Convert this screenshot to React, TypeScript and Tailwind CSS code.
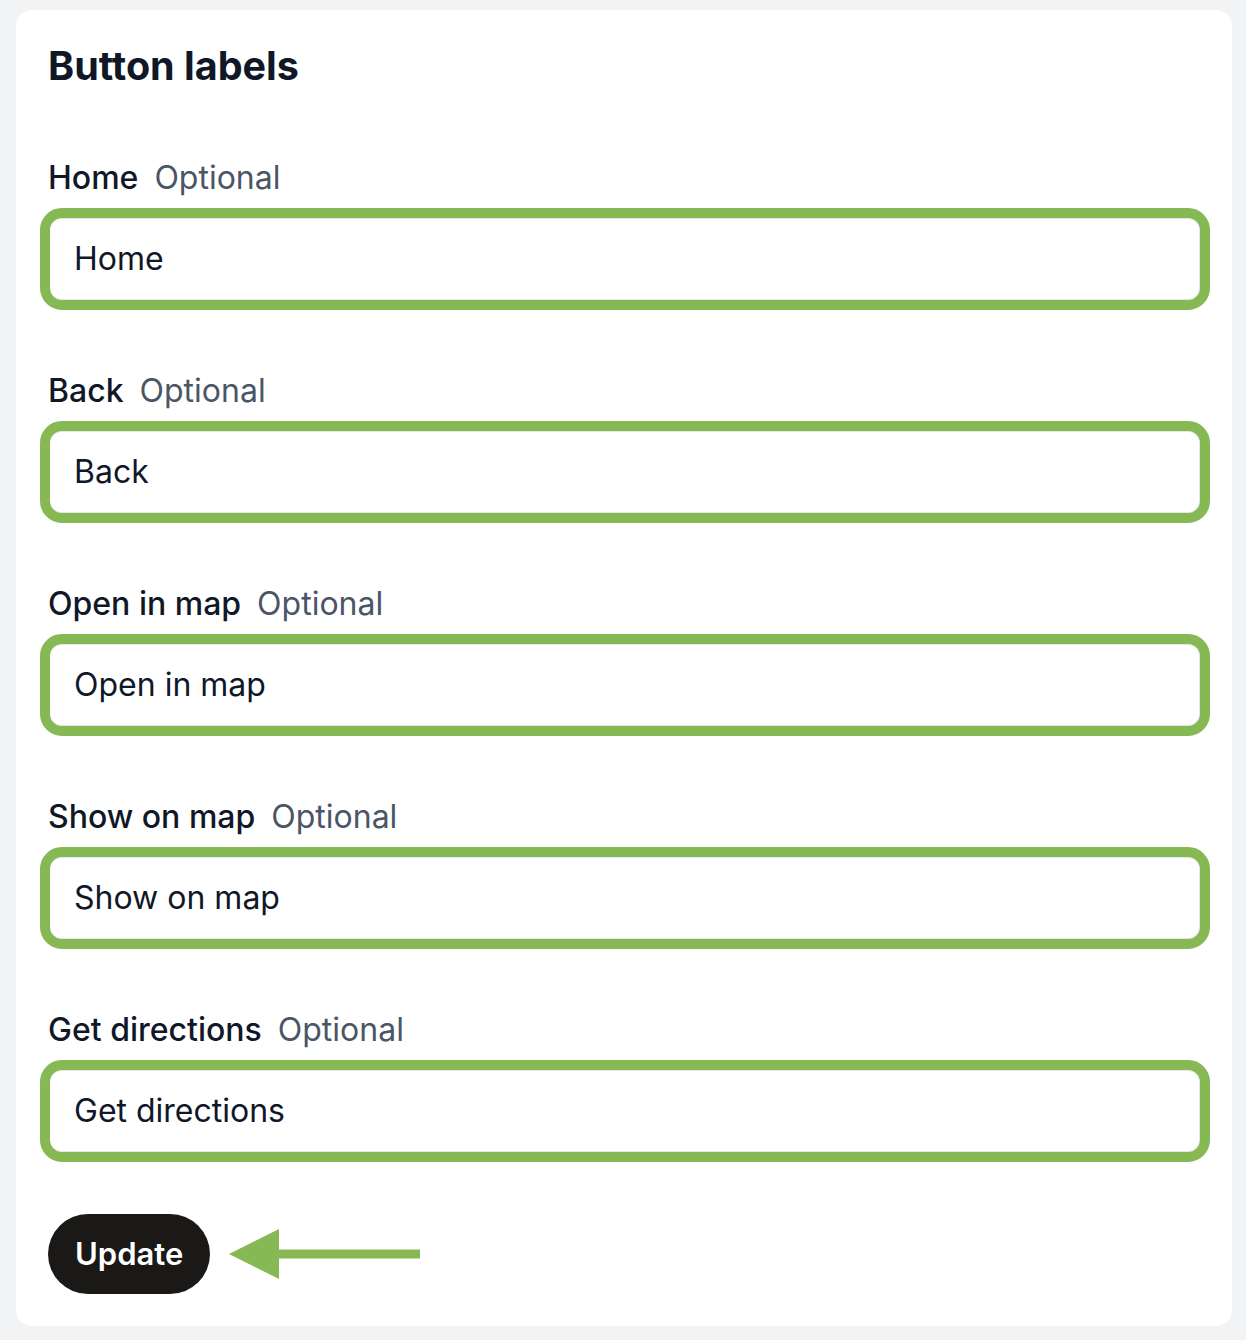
const fields = ["Home", "Back", "Open in map", "Show on map", "Get directions"]

const Field = ({ label }: { label: string }) => (
	<div className="flex flex-col">
		<div className="flex h-[40px] items-center gap-[16px] text-[32px] leading-[40px]">
			<span className="font-medium text-gray-900">{label}</span>
			<span className="text-gray-600">Optional</span>
		</div>
		<div className="ml-[2px] mt-[20px] rounded-[12px] outline-[10px] outline-solid outline-[#86b853]">
			<div className="flex h-[82px] items-center rounded-[12px] border border-l-0 border-gray-200 bg-white pl-[24px] text-[32px] text-gray-900 shadow-[0_1px_1px_rgba(0,0,0,0.08)]">
				{label}
			</div>
		</div>
	</div>
)

export default function App() {
	return (
		<div className="min-h-[1340px] bg-[#f2f3f5] px-[16px] pt-[10px] font-['Inter',sans-serif]">
			<div className="w-[1216px] rounded-[16px] bg-white px-[32px] pb-[32px] pt-[32px]">
				<h1 className="h-[48px] text-[39.5px] font-bold leading-[48px] text-gray-900">Button labels</h1>
				<div className="mt-[68px] flex flex-col gap-[71px]">
					{fields.map((f) => (
						<Field key={f} label={f} />
					))}
				</div>
				<div className="mt-[62px] flex items-center">
					<button
						type="button"
						className="flex h-[80px] items-center rounded-full bg-[#1a1917] px-[27px] text-[31px] font-semibold text-white"
					>
						Update
					</button>
					<svg className="ml-[19px]" width="192" height="52" viewBox="0 0 192 52">
						<polygon points="0,26 50,1 50,51" fill="#86b853" />
						<rect x="48" y="21.5" width="143" height="9" fill="#86b853" />
					</svg>
				</div>
			</div>
		</div>
	)
}
